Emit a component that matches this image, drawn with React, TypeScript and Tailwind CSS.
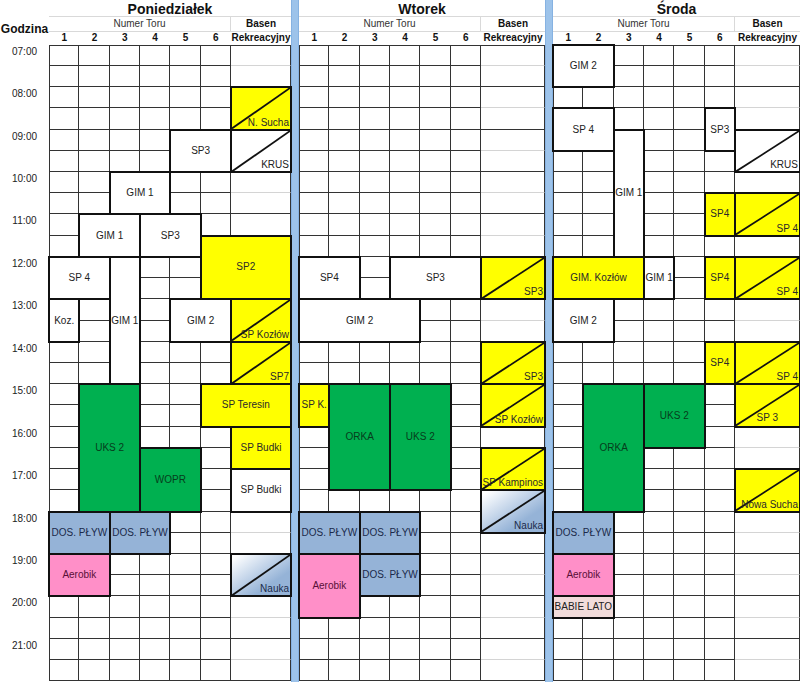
import React from "react";

type Kind = "white" | "yellow" | "green" | "blue" | "pink" | "babie" | "nauka";

type Slot = {
  pos: string; // grid placement, written as full tailwind classes
  label: string;
  kind: Kind;
  diag?: boolean;
  tx?: string; // label placement for diagonal cells
};

const KIND: Record<Kind, string> = {
  white: "bg-white text-[#222]",
  yellow: "bg-[#ffff00] text-[#2a2a2a]",
  green: "bg-[#00b050] text-[#063d1c]",
  blue: "bg-[#95b3d7] text-[#1b2a4a]",
  pink: "bg-[#ff8fc8] text-[#5a1038]",
  babie: "bg-[#f2dcdb] text-[#222]",
  nauka: "bg-linear-to-br from-white from-5% to-[#95b3d7] to-70% text-[#1b2a4a]",
};

const MON: Slot[] = [
  { pos: "col-start-7 row-start-3 row-span-2", label: "N. Sucha", kind: "yellow", diag: true },
  { pos: "col-start-7 row-start-5 row-span-2", label: "KRUS", kind: "white", diag: true },
  { pos: "col-start-5 col-span-2 row-start-5 row-span-2", label: "SP3", kind: "white" },
  { pos: "col-start-3 col-span-2 row-start-7 row-span-2", label: "GIM 1", kind: "white" },
  { pos: "col-start-2 col-span-2 row-start-9 row-span-2", label: "GIM 1", kind: "white" },
  { pos: "col-start-4 col-span-2 row-start-9 row-span-2", label: "SP3", kind: "white" },
  { pos: "col-start-6 col-span-2 row-start-10 row-span-3", label: "SP2", kind: "yellow" },
  { pos: "col-start-1 col-span-2 row-start-11 row-span-2", label: "SP 4", kind: "white" },
  { pos: "col-start-3 row-start-11 row-span-6", label: "GIM 1", kind: "white" },
  { pos: "col-start-1 row-start-13 row-span-2", label: "Koz.", kind: "white" },
  { pos: "col-start-5 col-span-2 row-start-13 row-span-2", label: "GIM 2", kind: "white" },
  { pos: "col-start-7 row-start-13 row-span-2", label: "SP Kozłów", kind: "yellow", diag: true },
  { pos: "col-start-7 row-start-15 row-span-2", label: "SP7", kind: "yellow", diag: true },
  { pos: "col-start-2 col-span-2 row-start-17 row-span-6", label: "UKS 2", kind: "green" },
  { pos: "col-start-6 col-span-2 row-start-17 row-span-2", label: "SP Teresin", kind: "yellow" },
  { pos: "col-start-4 col-span-2 row-start-20 row-span-3", label: "WOPR", kind: "green" },
  { pos: "col-start-7 row-start-19 row-span-2", label: "SP Budki", kind: "yellow" },
  { pos: "col-start-7 row-start-21 row-span-2", label: "SP Budki", kind: "white" },
  { pos: "col-start-1 col-span-2 row-start-23 row-span-2", label: "DOS. PŁYW", kind: "blue" },
  { pos: "col-start-3 col-span-2 row-start-23 row-span-2", label: "DOS. PŁYW", kind: "blue" },
  { pos: "col-start-1 col-span-2 row-start-25 row-span-2", label: "Aerobik", kind: "pink" },
  { pos: "col-start-7 row-start-25 row-span-2", label: "Nauka", kind: "nauka", diag: true },
];

const TUE: Slot[] = [
  { pos: "col-start-1 col-span-2 row-start-11 row-span-2", label: "SP4", kind: "white" },
  { pos: "col-start-4 col-span-3 row-start-11 row-span-2", label: "SP3", kind: "white" },
  { pos: "col-start-7 row-start-11 row-span-2", label: "SP3", kind: "yellow", diag: true },
  { pos: "col-start-1 col-span-4 row-start-13 row-span-2", label: "GIM 2", kind: "white" },
  { pos: "col-start-7 row-start-15 row-span-2", label: "SP3", kind: "yellow", diag: true },
  { pos: "col-start-7 row-start-17 row-span-2", label: "SP Kozłów", kind: "yellow", diag: true },
  { pos: "col-start-1 row-start-17 row-span-2", label: "SP K.", kind: "yellow" },
  { pos: "col-start-2 col-span-2 row-start-17 row-span-5", label: "ORKA", kind: "green" },
  { pos: "col-start-4 col-span-2 row-start-17 row-span-5", label: "UKS 2", kind: "green" },
  { pos: "col-start-7 row-start-20 row-span-2", label: "SP Kampinos", kind: "yellow", diag: true },
  { pos: "col-start-7 row-start-22 row-span-2", label: "Nauka", kind: "nauka", diag: true },
  { pos: "col-start-1 col-span-2 row-start-23 row-span-2", label: "DOS. PŁYW", kind: "blue" },
  { pos: "col-start-3 col-span-2 row-start-23 row-span-2", label: "DOS. PŁYW", kind: "blue" },
  { pos: "col-start-1 col-span-2 row-start-25 row-span-3", label: "Aerobik", kind: "pink" },
  { pos: "col-start-3 col-span-2 row-start-25 row-span-2", label: "DOS. PŁYW", kind: "blue" },
];

const WED: Slot[] = [
  { pos: "col-start-1 col-span-2 row-start-1 row-span-2", label: "GIM 2", kind: "white" },
  { pos: "col-start-1 col-span-2 row-start-4 row-span-2", label: "SP 4", kind: "white" },
  { pos: "col-start-6 row-start-4 row-span-2", label: "SP3", kind: "white" },
  { pos: "col-start-3 row-start-5 row-span-6", label: "GIM 1", kind: "white" },
  { pos: "col-start-7 row-start-5 row-span-2", label: "KRUS", kind: "white", diag: true },
  { pos: "col-start-6 row-start-8 row-span-2", label: "SP4", kind: "yellow" },
  { pos: "col-start-7 row-start-8 row-span-2", label: "SP 4", kind: "yellow", diag: true },
  { pos: "col-start-1 col-span-3 row-start-11 row-span-2", label: "GIM. Kozłów", kind: "yellow" },
  { pos: "col-start-4 row-start-11 row-span-2", label: "GIM 1", kind: "white" },
  { pos: "col-start-6 row-start-11 row-span-2", label: "SP4", kind: "yellow" },
  { pos: "col-start-7 row-start-11 row-span-2", label: "SP 4", kind: "yellow", diag: true },
  { pos: "col-start-1 col-span-2 row-start-13 row-span-2", label: "GIM 2", kind: "white" },
  { pos: "col-start-6 row-start-15 row-span-2", label: "SP4", kind: "yellow" },
  { pos: "col-start-7 row-start-15 row-span-2", label: "SP 4", kind: "yellow", diag: true },
  { pos: "col-start-2 col-span-2 row-start-17 row-span-6", label: "ORKA", kind: "green" },
  { pos: "col-start-4 col-span-2 row-start-17 row-span-3", label: "UKS 2", kind: "green" },
  { pos: "col-start-7 row-start-17 row-span-2", label: "SP 3", kind: "yellow", diag: true, tx: "bottom-[3px] right-[21px]" },
  { pos: "col-start-7 row-start-21 row-span-2", label: "Nowa Sucha", kind: "yellow", diag: true },
  { pos: "col-start-1 col-span-2 row-start-23 row-span-2", label: "DOS. PŁYW", kind: "blue" },
  { pos: "col-start-1 col-span-2 row-start-25 row-span-2", label: "Aerobik", kind: "pink" },
  { pos: "col-start-1 col-span-2 row-start-27", label: "BABIE LATO", kind: "babie" },
];

const HOURS = [
  "07:00", "08:00", "09:00", "10:00", "11:00", "12:00", "13:00", "14:00",
  "15:00", "16:00", "17:00", "18:00", "19:00", "20:00", "21:00",
];

const ROWS = 30;
const COLS = 7; // 6 lanes + basen

// read grid numbers back out of the class string so placement has one source
function parsePos(pos: string) {
  const num = (re: RegExp, d: number) => {
    const m = pos.match(re);
    return m ? Number(m[1]) : d;
  };
  return {
    c: num(/col-start-(\d+)/, 1) - 1,
    cs: num(/col-span-(\d+)/, 1),
    r: num(/row-start-(\d+)/, 1) - 1,
    rs: num(/row-span-(\d+)/, 1),
  };
}

function cellClass(r: number, c: number) {
  const basen = c === COLS - 1;
  // basen column: light half-hour lines, dark hour lines
  const bottom = basen && r % 2 === 0 ? "border-b-[#d4d4d4]" : "border-b-[#333]";
  return [
    "bg-white border-b border-r border-r-[#333]",
    bottom,
    c === 0 ? "border-l border-l-[#333]" : "",
    r === 0 ? "border-t border-t-[#333]" : "",
  ].join(" ");
}

function Block({ s }: { s: Slot }) {
  return (
    <div
      className={`${s.pos} ${KIND[s.kind]} relative -m-px border-2 border-[#111] flex items-center justify-center text-[10px] leading-none whitespace-nowrap`}
    >
      {s.diag ? (
        <>
          <svg
            className="absolute inset-0 h-full w-full"
            viewBox="0 0 100 100"
            preserveAspectRatio="none"
            aria-hidden="true"
          >
            <line
              x1="0"
              y1="100"
              x2="100"
              y2="0"
              stroke="#111"
              strokeWidth="1.8"
              vectorEffect="non-scaling-stroke"
            />
          </svg>
          <span className={`absolute ${s.tx ?? "bottom-[1px] right-[1px]"}`}>{s.label}</span>
        </>
      ) : (
        s.label
      )}
    </div>
  );
}

function Day({ name, slots, width }: { name: string; slots: Slot[]; width: string }) {
  const taken = new Set<string>();
  slots.forEach((s) => {
    const p = parsePos(s.pos);
    for (let r = p.r; r < p.r + p.rs; r++)
      for (let c = p.c; c < p.c + p.cs; c++) taken.add(`${r}-${c}`);
  });

  // free cells are auto-placed around the explicitly placed blocks
  const cells: React.ReactNode[] = [];
  for (let r = 0; r < ROWS; r++)
    for (let c = 0; c < COLS; c++)
      if (!taken.has(`${r}-${c}`)) cells.push(<div key={`${r}-${c}`} className={cellClass(r, c)} />);

  return (
    <div className={`${width} shrink-0 flex flex-col`}>
      <div className="h-[17px] border-b border-[#d9d9d9] flex items-center justify-center pt-[2px] text-[14px] font-bold text-[#111]">
        {name}
      </div>
      <div className="h-[15px] grid grid-cols-[182px_1fr] border-b border-[#d9d9d9] text-[10px] leading-none">
        <div className="border-r border-[#d9d9d9] flex items-center justify-center text-[#333]">Numer Toru</div>
        <div className="flex items-center justify-center font-bold text-[#111]">Basen</div>
      </div>
      <div className="h-[12.7px] grid grid-cols-[repeat(6,30.33px)_1fr] items-center text-[10px] font-bold leading-none text-[#111]">
        {[1, 2, 3, 4, 5, 6].map((n) => (
          <div key={n} className="text-center">
            {n}
          </div>
        ))}
        <div className="text-center whitespace-nowrap">Rekreacyjny</div>
      </div>
      <div className="grid grid-cols-[repeat(6,30.33px)_1fr] grid-rows-[repeat(30,21.22px)]">
        {cells}
        {slots.map((s, i) => (
          <Block key={i} s={s} />
        ))}
      </div>
    </div>
  );
}

function TimeColumn() {
  return (
    <div className="w-[49px] shrink-0 flex flex-col">
      <div className="h-[44.7px] flex items-end justify-center pb-[7px] text-[12px] font-bold text-[#111]">
        Godzina
      </div>
      <div className="grid grid-rows-[repeat(15,42.44px)]">
        {HOURS.map((h) => (
          <div key={h} className="pt-[2px] text-center text-[10px] leading-none text-[#222]">
            {h}
          </div>
        ))}
      </div>
    </div>
  );
}

function Sep() {
  return <div className="w-[8px] shrink-0 bg-[#9dc3ea] border-x border-[#86b2e2]" />;
}

export default function App() {
  return (
    <div className="flex w-[800px] h-[682px] overflow-hidden bg-white font-['Liberation_Sans',Arial,sans-serif]">
      <TimeColumn />
      <Day name="Poniedziałek" slots={MON} width="w-[242px]" />
      <Sep />
      <Day name="Wtorek" slots={TUE} width="w-[246px]" />
      <Sep />
      <Day name="Środa" slots={WED} width="w-[247px]" />
    </div>
  );
}
